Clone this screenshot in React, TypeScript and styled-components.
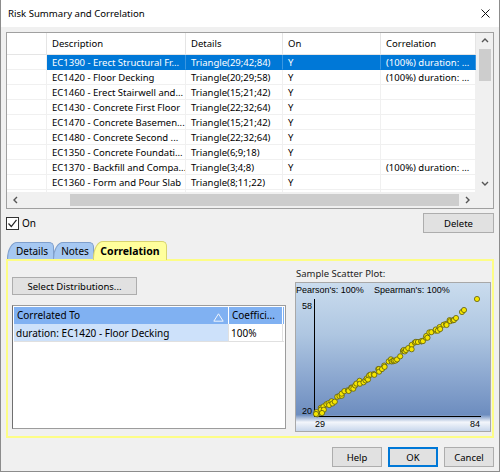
import React from 'react';
import styled, { createGlobalStyle } from 'styled-components';

const GlobalStyle = createGlobalStyle`
  html, body { margin: 0; padding: 0; background: #f0f0f0; }
  * { box-sizing: border-box; }
  body {
    font-family: "Noto Sans", "Open Sans", sans-serif;
    font-size: 9.5px;
    color: #000;
  }
`;

// ---- window chrome ----
const Window = styled.div`
  width: 500px;
  height: 472px;
  display: flex;
  flex-direction: column;
  background: #f0f0f0;
  border: 1px solid #8c8c8c;
  border-top: none;
  overflow: hidden;
`;

const TitleBar = styled.div`
  height: 27px;
  flex: none;
  background: #fff;
  display: flex;
  align-items: center;
  justify-content: space-between;
  padding: 0 9px 0 7px;
`;

const Title = styled.span`
  font-size: 9.6px;
  color: #000;
`;

const Body = styled.div`
  flex: 1;
  display: flex;
  flex-direction: column;
  padding: 5px 5px 0 5px;
`;

// ---- summary grid ----
const GridFrame = styled.div`
  height: 177px;
  border: 1px solid #a0a0a0;
  background: #fff;
  display: grid;
  grid-template-columns: 1fr 17px;
  grid-template-rows: 1fr 16px;
  overflow: hidden;
`;

const TableArea = styled.div`
  overflow: hidden;
`;

const cols = '40px 139px 97px 98px 95px';

const HeaderRow = styled.div`
  display: grid;
  grid-template-columns: ${cols};
  height: 22px;
  border-bottom: 1px solid #e5e5e5;
`;

const HeaderCell = styled.div`
  padding: 0 5px;
  line-height: 21px;
  border-right: 1px solid #e5e5e5;
  white-space: nowrap;
  overflow: hidden;
`;

const Row = styled.div<{ $selected?: boolean }>`
  display: grid;
  grid-template-columns: ${cols};
  height: 15px;
  color: ${(p) => (p.$selected ? '#fff' : '#000')};
`;

const Cell = styled.div<{ $selected?: boolean }>`
  padding: 0 5px;
  line-height: 15px;
  height: 15px;
  white-space: nowrap;
  overflow: hidden;
  border-right: 1px solid ${(p) => (p.$selected ? '#3a96e0' : '#f0f0f0')};
  border-bottom: 1px solid ${(p) => (p.$selected ? '#0078d7' : '#f0f0f0')};
  background: ${(p) => (p.$selected ? '#0078d7' : '#fff')};
`;

const RowHead = styled.div`
  border-right: 1px solid #f0f0f0;
  border-bottom: 1px solid #f0f0f0;
  background: #fff;
`;

const VScroll = styled.div`
  background: #f0f0f0;
  display: flex;
  flex-direction: column;
  align-items: center;
`;

const HScroll = styled.div`
  background: #f0f0f0;
  display: flex;
  align-items: center;
`;

const ArrowBox = styled.div`
  width: 17px;
  height: 16px;
  flex: none;
  display: flex;
  align-items: center;
  justify-content: center;
`;

const VThumb = styled.div`
  width: 12px;
  height: 32px;
  background: #cdcdcd;
`;

const Spacer = styled.div`
  flex: 1;
`;

const HThumb = styled.div`
  height: 12px;
  width: 389px;
  margin-left: 46px;
  background: #cdcdcd;
`;

const Corner = styled.div`
  background: #f0f0f0;
`;

// ---- under grid ----
const ActionRow = styled.div`
  display: flex;
  align-items: center;
  justify-content: space-between;
  margin-top: 4px;
  height: 20px;
`;

const CheckLabel = styled.label`
  display: flex;
  align-items: center;
  gap: 3px;
  font-size: 10px;
`;

const CheckBox = styled.span`
  width: 13px;
  height: 13px;
  border: 1px solid #333;
  background: #fff;
  display: flex;
  align-items: center;
  justify-content: center;
`;

const Button = styled.button<{ $w: number; $h?: number; $default?: boolean }>`
  width: ${(p) => p.$w}px;
  height: ${(p) => p.$h ?? 20}px;
  padding: 0;
  font-family: inherit;
  font-size: 9.5px;
  color: #000;
  background: #e1e1e1;
  border: 1px solid ${(p) => (p.$default ? '#0078d7' : '#adadad')};
  box-shadow: ${(p) => (p.$default ? 'inset 0 0 0 1px #0078d7' : 'none')};
`;

// ---- tabs ----
const TabBar = styled.div`
  display: flex;
  align-items: flex-end;
  height: 18px;
  margin-top: 8px;
  padding-left: 2px;
  position: relative;
  z-index: 1;
`;

const Tab = styled.div<{ $w: number; $active?: boolean }>`
  width: ${(p) => p.$w}px;
  height: ${(p) => (p.$active ? 19 : 17)}px;
  margin-left: -1px;
  padding-left: ${(p) => (p.$active ? 0 : 3)}px;
  display: flex;
  align-items: center;
  justify-content: center;
  font-size: ${(p) => (p.$active ? 10.5 : 10)}px;
  font-weight: ${(p) => (p.$active ? 700 : 400)};
  background: ${(p) => (p.$active ? '#ffff9c' : '#a6c8f2')};
  border: 1px solid ${(p) => (p.$active ? '#d8d470' : '#7f9fcc')};
  border-bottom: none;
  border-radius: 10px 5px 0 0 / 17px 5px 0 0;
  margin-bottom: ${(p) => (p.$active ? -1 : 0)}px;
`;

const TabPanel = styled.div`
  height: 179px;
  border: 2px solid #fdfd86;
  display: grid;
  grid-template-columns: 274px 196px;
  column-gap: 9px;
  padding: 6px 0 0 4px;
`;

const LeftCol = styled.div`
  display: flex;
  flex-direction: column;
  padding-top: 10px;
  gap: 10px;
`;

const RightCol = styled.div`
  display: flex;
  flex-direction: column;
`;

const PlotLabel = styled.div`
  height: 14px;
  line-height: 14px;
  font-size: 9.5px;
  padding-left: 1px;
  color: #222;
`;

const PlotBox = styled.div`
  margin-top: 1px;
  height: 150px;
  border: 1px solid #a8a8a8;
  background: linear-gradient(
    to bottom,
    #cadcee 0%,
    #aec6e1 35%,
    #8aa6cf 65%,
    #6d8dbf 89%,
    #f3f6fb 94%,
    #c8d7ec 100%
  );
`;

const CorrList = styled.div`
  height: 124px;
  border: 1px solid #9c9c9c;
  border-left-color: #6f6f6f;
  background: #fff;
  padding: 1px;
`;

const CorrHead = styled.div`
  display: grid;
  grid-template-columns: 215px 54px;
  height: 17px;
  background: #80b1f2;
`;

const CorrHeadCell = styled.div`
  position: relative;
  padding: 0 3px;
  line-height: 17px;
  font-size: 10px;
  border-right: 1px solid #fff;
  white-space: nowrap;
  overflow: hidden;
`;

const SortMark = styled.svg`
  position: absolute;
  right: 4px;
  top: 6px;
`;

const CorrRow = styled.div`
  display: grid;
  grid-template-columns: 215px 54px;
  height: 18px;
  border-bottom: 1px solid #e0e0e0;
`;

const CorrCell = styled.div<{ $hl?: boolean }>`
  padding: 0 2px;
  line-height: 18px;
  font-size: 10px;
  background: ${(p) => (p.$hl ? '#cde1fa' : '#fff')};
  border-right: 1px solid #e0e0e0;
  white-space: nowrap;
  overflow: hidden;
`;

const Footer = styled.div`
  display: flex;
  justify-content: flex-end;
  gap: 6px;
  margin-top: 9px;
`;

// ---- data ----
type Risk = { desc: string; details: string; on: string; corr: string };

const risks: Risk[] = [
  { desc: 'EC1390 - Erect Structural Fr...', details: 'Triangle(29;42;84)', on: 'Y', corr: '(100%) duration: ...' },
  { desc: 'EC1420 - Floor Decking', details: 'Triangle(20;29;58)', on: 'Y', corr: '(100%) duration: ...' },
  { desc: 'EC1460 - Erect Stairwell and...', details: 'Triangle(15;21;42)', on: 'Y', corr: '' },
  { desc: 'EC1430 - Concrete First Floor', details: 'Triangle(22;32;64)', on: 'Y', corr: '' },
  { desc: 'EC1470 - Concrete Basemen...', details: 'Triangle(15;21;42)', on: 'Y', corr: '' },
  { desc: 'EC1480 - Concrete Second ...', details: 'Triangle(22;32;64)', on: 'Y', corr: '' },
  { desc: 'EC1350 - Concrete Foundati...', details: 'Triangle(6;9;18)', on: 'Y', corr: '' },
  { desc: 'EC1370 - Backfill and Compa...', details: 'Triangle(3;4;8)', on: 'Y', corr: '(100%) duration: ...' },
  { desc: 'EC1360 - Form and Pour Slab', details: 'Triangle(8;11;22)', on: 'Y', corr: '' },
  { desc: '', details: '', on: '', corr: '' },
];

const scatter: [number, number][] = (() => {
  let s = 17;
  const rnd = () => {
    s = (s * 9301 + 49297) % 233280;
    return s / 233280;
  };
  const pts: [number, number][] = [];
  for (let i = 0; i < 78; i++) {
    const x = 20 + (i / 77) * 138 + (rnd() - 0.5) * 3;
    const y = 130 - (x - 20) * 0.69 + (rnd() - 0.5) * 5;
    pts.push([x, y]);
  }
  pts.push([160, 35], [166, 29], [168, 27], [181, 16], [20, 131], [26, 130]);
  return pts;
})();

const Chevron = ({ dir }: { dir: 'up' | 'down' | 'left' | 'right' }) => {
  const d = {
    up: 'M1 5 L4 2 L7 5',
    down: 'M1 2 L4 5 L7 2',
    left: 'M5 1 L2 4 L5 7',
    right: 'M2 1 L5 4 L2 7',
  }[dir];
  return (
    <svg width="8" height="8" viewBox="0 0 8 8">
      <path d={d} fill="none" stroke="#555" strokeWidth="1.4" />
    </svg>
  );
};

const ScatterPlot = () => (
  <svg width="194" height="148" viewBox="0 0 194 148" style={{ display: 'block' }}>
    <g fontFamily="'Liberation Sans', Arial, sans-serif" fontSize="9" fill="#000">
      <text x="0" y="9.5">Pearson's: 100%</text>
      <text x="78" y="9.5">Spearman's: 100%</text>
      <text x="16" y="26" textAnchor="end">58</text>
      <text x="16" y="131" textAnchor="end">20</text>
      <text x="19" y="144">29</text>
      <text x="184" y="144" textAnchor="end">84</text>
    </g>
    <line x1="18.5" y1="16" x2="18.5" y2="133.5" stroke="#000" />
    <line x1="18" y1="133.5" x2="185" y2="133.5" stroke="#000" />
    {scatter.map(([x, y], i) => (
      <circle key={i} cx={x} cy={y} r="2.6" fill="#f6e600" stroke="#5c5a10" strokeWidth="0.8" />
    ))}
  </svg>
);

export default function App() {
  return (
    <>
      <GlobalStyle />
      <Window>
        <TitleBar>
          <Title>Risk Summary and Correlation</Title>
          <svg width="9" height="9" viewBox="0 0 9 9">
            <path d="M0.5 0.5 L8.5 8.5 M8.5 0.5 L0.5 8.5" stroke="#111" strokeWidth="1" />
          </svg>
        </TitleBar>
        <Body>
          <GridFrame>
            <TableArea>
              <HeaderRow>
                <HeaderCell />
                <HeaderCell>Description</HeaderCell>
                <HeaderCell>Details</HeaderCell>
                <HeaderCell>On</HeaderCell>
                <HeaderCell>Correlation</HeaderCell>
              </HeaderRow>
              {risks.map((r, i) => {
                const sel = i === 0;
                return (
                  <Row key={i} $selected={sel}>
                    <RowHead />
                    <Cell $selected={sel}>{r.desc}</Cell>
                    <Cell $selected={sel}>{r.details}</Cell>
                    <Cell $selected={sel}>{r.on}</Cell>
                    <Cell $selected={sel}>{r.corr}</Cell>
                  </Row>
                );
              })}
            </TableArea>
            <VScroll>
              <ArrowBox>
                <Chevron dir="up" />
              </ArrowBox>
              <VThumb />
              <Spacer />
              <ArrowBox>
                <Chevron dir="down" />
              </ArrowBox>
            </VScroll>
            <HScroll>
              <ArrowBox>
                <Chevron dir="left" />
              </ArrowBox>
              <HThumb />
              <Spacer />
              <ArrowBox>
                <Chevron dir="right" />
              </ArrowBox>
            </HScroll>
            <Corner />
          </GridFrame>

          <ActionRow>
            <CheckLabel>
              <CheckBox>
                <svg width="11" height="11" viewBox="0 0 11 11">
                  <path d="M1.5 5.5 L4.3 8.5 L9.5 1.8" fill="none" stroke="#222" strokeWidth="1.2" />
                </svg>
              </CheckBox>
              On
            </CheckLabel>
            <Button $w={71}>Delete</Button>
          </ActionRow>

          <TabBar>
            <Tab $w={47}>Details</Tab>
            <Tab $w={41}>Notes</Tab>
            <Tab $w={74} $active>
              Correlation
            </Tab>
          </TabBar>
          <TabPanel>
            <LeftCol>
              <Button $w={125} $h={18}>
                Select Distributions...
              </Button>
              <CorrList>
                <CorrHead>
                  <CorrHeadCell>
                    Correlated To
                    <SortMark width="11" height="9" viewBox="0 0 11 9">
                      <path d="M5.5 0.8 L10.2 8.2 L0.8 8.2 Z" fill="none" stroke="#eef4fc" strokeWidth="1" />
                    </SortMark>
                  </CorrHeadCell>
                  <CorrHeadCell>Coeffici...</CorrHeadCell>
                </CorrHead>
                <CorrRow>
                  <CorrCell $hl>duration: EC1420 - Floor Decking</CorrCell>
                  <CorrCell>100%</CorrCell>
                </CorrRow>
              </CorrList>
            </LeftCol>
            <RightCol>
              <PlotLabel>Sample Scatter Plot:</PlotLabel>
              <PlotBox>
                <ScatterPlot />
              </PlotBox>
            </RightCol>
          </TabPanel>

          <Footer>
            <Button $w={50}>Help</Button>
            <Button $w={50} $default>
              OK
            </Button>
            <Button $w={50}>Cancel</Button>
          </Footer>
        </Body>
      </Window>
    </>
  );
}
